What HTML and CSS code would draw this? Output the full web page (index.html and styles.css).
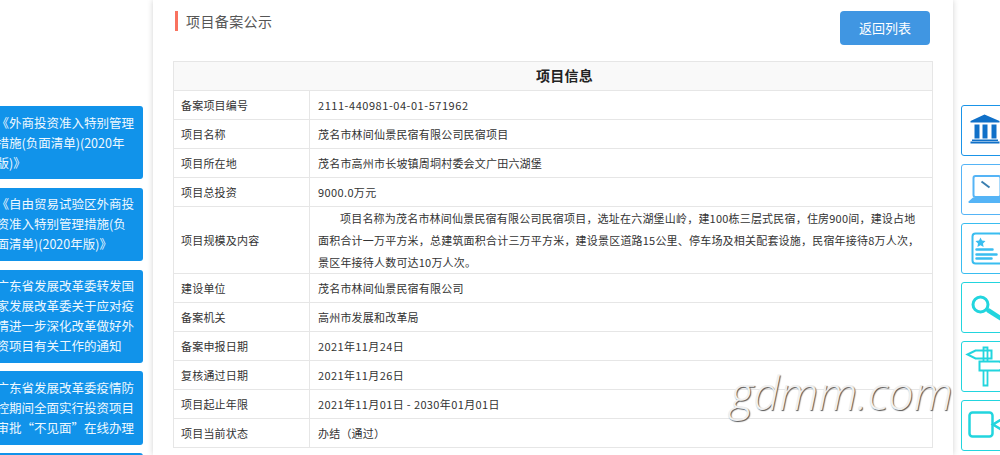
FILE: index.html
```html
<!DOCTYPE html>
<html lang="zh-CN">
<head>
<meta charset="utf-8">
<title>项目备案公示</title>
<link rel="stylesheet" href="styles.css">
</head>
<body>
<div class="page">
  <aside class="side">
    <a class="side-btn">《外商投资准入特别管理措施(负面清单)(2020年版)》</a>
    <a class="side-btn">《自由贸易试验区外商投资准入特别管理措施(负面清单)(2020年版)》</a>
    <a class="side-btn">广东省发展改革委转发国家发展改革委关于应对疫情进一步深化改革做好外资项目有关工作的通知</a>
    <a class="side-btn">广东省发展改革委疫情防控期间全面实行投资项目审批“不见面”在线办理</a>
    <a class="side-btn">广东省</a>
  </aside>
  <main class="card">
    <div class="head">
      <h2 class="title">项目备案公示</h2>
      <a class="back">返回列表</a>
    </div>
    <table class="info">
      <colgroup><col class="c1"><col></colgroup>
      <tr class="cap"><th colspan="2">项目信息</th></tr>
      <tr><td>备案项目编号</td><td class="code">2111-440981-04-01-571962</td></tr>
      <tr><td>项目名称</td><td>茂名市林间仙景民宿有限公司民宿项目</td></tr>
      <tr><td>项目所在地</td><td>茂名市高州市长坡镇周垌村委会文广田六湖堡</td></tr>
      <tr><td>项目总投资</td><td class="num">9000.0万元</td></tr>
      <tr class="tall"><td>项目规模及内容</td><td><p class="desc">项目名称为茂名市林间仙景民宿有限公司民宿项目，选址在六湖堡山岭，建100栋三层式民宿，住房900间，建设占地面积合计一万平方米，总建筑面积合计三万平方米，建设景区道路15公里、停车场及相关配套设施，民宿年接待8万人次，景区年接待人数可达10万人次。</p></td></tr>
      <tr><td>建设单位</td><td>茂名市林间仙景民宿有限公司</td></tr>
      <tr><td>备案机关</td><td>高州市发展和改革局</td></tr>
      <tr><td>备案申报日期</td><td class="num">2021年11月24日</td></tr>
      <tr><td>复核通过日期</td><td class="num">2021年11月26日</td></tr>
      <tr><td>项目起止年限</td><td class="num">2021年11月01日 - 2030年01月01日</td></tr>
      <tr><td>项目当前状态</td><td>办结（通过）</td></tr>
    </table>
  </main>
  <nav class="rail">
    <a class="tile t1"><svg viewBox="0 0 60 48" width="60" height="48"><path fill="#1070c8" d="M22.500 8.500 37.500 15v1.500h-29V15zM12.500 18.500h5v14h-5zM20.500 18.500h5v14h-5zM29.500 18.500h5v14h-5zM10 33.500h26v1.500H10zM8.500 35.500h29v2h-29z"/></svg></a>
    <a class="tile t2"><svg viewBox="0 0 60 48" width="60" height="48"><rect x="11.500" y="11" width="27" height="21" rx="2" fill="none" stroke="#55b4f6" stroke-width="2"/><path fill="#55b4f6" d="M11 32.500h28l3 4a1 1 0 0 1-1 1.500H7.500a1 1 0 0 1-1-1.500z"/><path stroke="#3a7fb0" stroke-width="2" d="m19.500 16.500 8 6"/></svg></a>
    <a class="tile t3"><svg viewBox="0 0 60 48" width="60" height="48"><rect x="10.500" y="9.500" width="29.500" height="30" rx="3" fill="none" stroke="#39bdf0" stroke-width="2"/><path fill="#39bdf0" d="m18.500 13.500 1.500 3 3.500.5-2.500 2.500.6 3.500-3.100-1.700-3.100 1.700.6-3.500-2.500-2.500 3.500-.5z"/><path stroke="#39bdf0" stroke-width="2.500" stroke-linecap="round" d="M14.500 25.500h16M14.500 30.500h20M14.500 34.500h15"/></svg></a>
    <a class="tile t4"><svg viewBox="0 0 60 48" width="60" height="48"><circle cx="18.500" cy="21.500" r="7.500" fill="none" stroke="#22d5de" stroke-width="3"/><path stroke="#22d5de" stroke-width="4.500" stroke-linecap="round" d="m26.500 27.500 14 9"/></svg></a>
    <a class="tile t5"><svg viewBox="0 0 60 48" width="60" height="48"><path fill="none" stroke="#22d5de" stroke-width="2" d="M5.500 12.500l8-4h16v8h-16z"/><path fill="none" stroke="#22d5de" stroke-width="1.800" d="M21.500 5.500h4v38h-4z"/><path fill="#fff" stroke="#22d5de" stroke-width="2" d="M17.500 19.500h20l6 4.500-6 4.500h-20z"/></svg></a>
    <a class="tile t6"><svg viewBox="0 0 60 48" width="60" height="48"><rect x="7.500" y="11.500" width="23" height="24" rx="3" fill="none" stroke="#22d5de" stroke-width="2.500"/><path fill="none" stroke="#22d5de" stroke-width="2.500" d="M45 15 31 23.500 45 32"/></svg></a>
  </nav>
</div>
<div class="mark">gdmm.com</div>
</body>
</html>
```
FILE: styles.css
```css
* { box-sizing: border-box; }
html, body { margin: 0; height: 455px; overflow: hidden; background: #fff; }
body { font-family: "Noto Sans CJK SC", "Noto Sans", sans-serif; color: #333; position: relative; }
.page { display: flex; height: 455px; overflow: hidden; }
.side { width: 153px; flex: none; padding-top: 106px; display: flex; flex-direction: column; gap: 8.500px; overflow: hidden; }
.side-btn { display: block; flex: none; width: 163px; margin-left: -20px; padding: 6.650px 8px 6.650px 16.500px; background: #1193ea; color: #eef8ff; font-size: 12.500px; line-height: 20px; border-radius: 3px; }
.card { width: 800px; flex: none; height: 455px; padding: 0 20px; background: #fff; box-shadow: 0 0 6px rgba(0,0,0,.18); }
.head { display: flex; justify-content: space-between; align-items: flex-start; height: 61px; padding-top: 11px; }
.title { margin: 0 0 0 2px; border-left: 3px solid #f9725f; padding-left: 8px; height: 20px; font-size: 14px; line-height: 20px; font-weight: 400; color: #555; letter-spacing: .4px; }
.back { width: 90px; height: 34px; margin-right: 3px; background: #4096e2; color: #fff; border-radius: 4px; font-size: 13px; line-height: 34px; text-align: center; }
.info { width: 760px; border-collapse: collapse; font-size: 11px; color: #333; table-layout: fixed; letter-spacing: .2px; }
.c1 { width: 136px; }
.info td, .info th { border: 1px solid #e6e6e6; padding: 0 8px; height: 29px; line-height: 20px; }
.info td:first-child { padding-left: 7px; }
.info th { height: 29px; padding: 0 8px 2px 31px; background: #f9f9f9; font-size: 14px; font-weight: 700; color: #222; letter-spacing: .25px; }
.info .code { letter-spacing: .55px; }
.info .num { letter-spacing: .38px; }
.desc { margin: 0; text-indent: 22px; line-height: 22px; }
.tall td { height: 67px; }
.rail { flex: none; width: 47px; padding: 105px 0 0 8px; display: flex; flex-direction: column; gap: 8px; overflow: hidden; }
.tile { flex: none; display: block; width: 60px; height: 51px; border: 1.500px solid #1a94e8; border-radius: 3px 0 0 3px; background: #fff; overflow: hidden; }
.tile svg { display: block; }
.t2 { border-color: #55b4f6; }
.t3 { border-color: #39bdf0; }
.t4, .t5, .t6 { border-color: #22d5de; }
.mark { position: absolute; left: 730px; top: 362px; font-family: "Open Sans", sans-serif; font-style: italic; font-weight: 300; font-size: 45.500px; line-height: 60px; color: #f0f0f0; text-shadow: 1px 1px 1px #555; }
```
